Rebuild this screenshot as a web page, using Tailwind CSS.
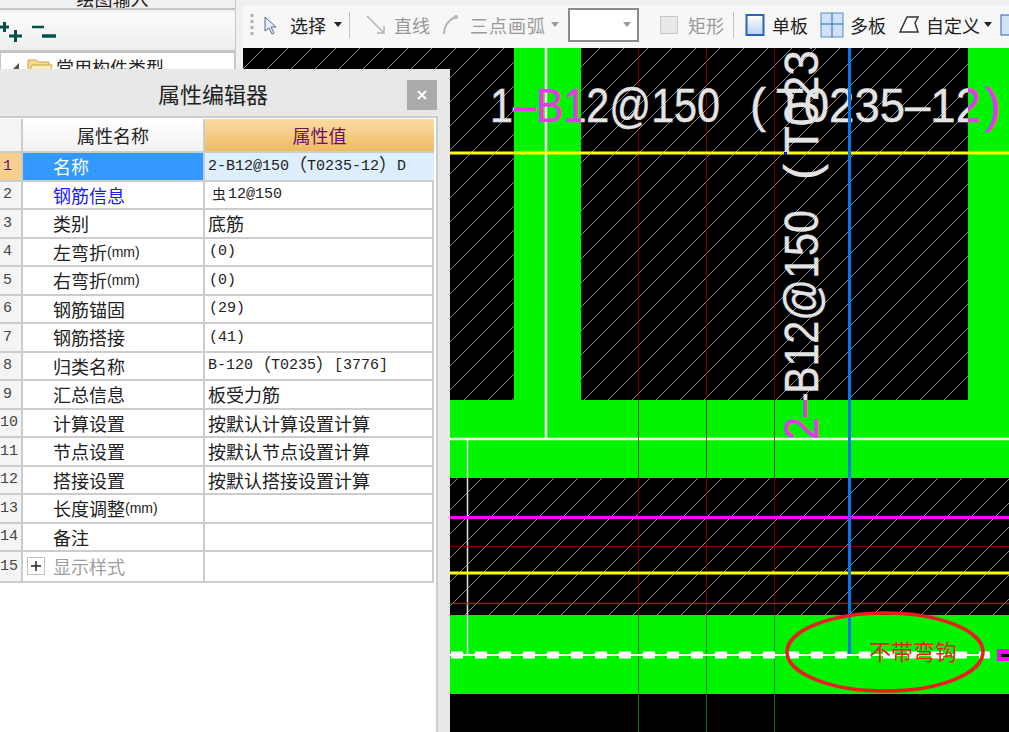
<!DOCTYPE html>
<html lang="zh-CN">
<head>
  <meta charset="UTF-8">
  <title>属性编辑器</title>
  <script src="https://cdn.jsdelivr.net/npm/@tailwindcss/browser@4"></script>
</head>
<body class="bg-[#f0f0f0]">
  <div class="relative w-[1009px] h-[732px] overflow-hidden flex font-['Noto_Sans_CJK_SC',sans-serif] text-[#222]">

    <!-- left tree panel -->
    <div class="w-[236px] h-full shrink-0 flex flex-col bg-[#f0f0f0] border-r border-[#c8c8c8]">
      <div class="h-[10px] overflow-hidden border-b-2 border-[#c4c4c4] flex justify-center">
        <span class="text-[18px] leading-[18px] mt-[-11px] ml-[-10px]">绘图输入</span>
      </div>
      <div class="h-[40px] mt-[2px] flex items-center gap-[9px] bg-gradient-to-b from-[#fbfbfb] to-[#eeeeee] border-b-2 border-[#c4c4c4]">
        <svg width="23" height="24" viewBox="0 0 23 24" class="shrink-0"><path d="M0 8h9M4.500 3v10M9 17h13M15.500 11v12" stroke="#04504a" stroke-width="3" fill="none"/></svg>
        <svg width="26" height="22" viewBox="0 0 26 22" class="shrink-0"><path d="M0 7h12" stroke="#04504a" stroke-width="2.500"/><path d="M10 16h14" stroke="#04504a" stroke-width="3.500"/></svg>
      </div>
      <div class="flex-1 bg-white border border-[#c4c4c4] flex items-start pt-[2px] pl-[8px]">
        <svg width="12" height="14" viewBox="0 0 12 14" class="mt-[6px]"><path d="M10 2v9H1z" fill="#555"/></svg>
        <svg width="26" height="20" viewBox="0 0 26 20" class="ml-[6px] mt-[2px]"><path d="M1 3h8l2 2h11v13H1z" fill="#f8dc8c" stroke="#c8a44c"/><path d="M5 8h20l-3 10H1z" fill="#fdeeb8" stroke="#c8a44c"/></svg>
        <span class="ml-[3px] text-[18px] leading-[24px]">常用构件类型</span>
      </div>
    </div>

    <!-- right: toolbar + drawing -->
    <div class="ml-[7px] flex-1 min-w-0 flex flex-col">
      <div class="h-[6px]"></div>
      <div class="h-[42px] shrink-0 flex items-center pb-[5px] text-[18px] leading-none bg-[#f7f7f7] overflow-hidden whitespace-nowrap [&>*]:shrink-0">
        <svg width="4" height="24" viewBox="0 0 4 24" class="ml-[7px]"><path d="M2 1v22" stroke="#b0b0b0" stroke-width="3" stroke-dasharray="3 3"/></svg>
        <svg width="14" height="20" viewBox="0 0 14 20" class="ml-[9px]"><path d="M2 2v14l4-3 3 6 2-1-3-6h5z" fill="#e8eef8" stroke="#5a6a90"/></svg>
        <span class="ml-[13px]">选择</span>
        <span class="ml-[8px] w-0 h-0 border-x-[4px] border-x-transparent border-t-[5px] border-t-[#222]"></span>
        <span class="ml-[7px] w-px h-[26px] bg-[#c0c0c0]"></span>
        <svg width="22" height="22" viewBox="0 0 22 22" class="ml-[15px]"><path d="M2 2l17 17M19 12v7h-7" stroke="#b4b4b4" stroke-width="1.500" fill="none"/></svg>
        <span class="ml-[7px] text-[#999]">直线</span>
        <svg width="18" height="22" viewBox="0 0 18 22" class="ml-[11px]"><path d="M3 20C3 12 8 6 14 3" stroke="#b4b4b4" stroke-width="2" fill="none"/><circle cx="15" cy="3" r="2" fill="#b4b4b4"/></svg>
        <span class="ml-[11px] text-[#999] tracking-[1px]">三点画弧</span>
        <span class="ml-[5px] w-0 h-0 border-x-[4px] border-x-transparent border-t-[5px] border-t-[#999]"></span>
        <div class="ml-[9px] w-[71px] h-[34px] bg-white border-2 border-[#8c8c8c] flex items-center justify-end pr-[6px]">
          <span class="w-0 h-0 border-x-[4px] border-x-transparent border-t-[5px] border-t-[#999]"></span>
        </div>
        <span class="ml-[21px] w-[18px] h-[18px] bg-[#e8e8e8] border border-[#c8c8c8]"></span>
        <span class="ml-[10px] text-[#999]">矩形</span>
        <span class="ml-[9px] w-px h-[26px] bg-[#c0c0c0]"></span>
        <svg width="20" height="24" viewBox="0 0 20 24" class="ml-[11px]"><defs><linearGradient id="board" x1="0" y1="0" x2="0" y2="1"><stop offset="0" stop-color="#fff"/><stop offset="1" stop-color="#b8d2f4"/></linearGradient></defs><rect x="1.500" y="2" width="17" height="20" fill="url(#board)" stroke="#2a62b8" stroke-width="2"/></svg>
        <span class="ml-[7px]">单板</span>
        <svg width="24" height="26" viewBox="0 0 24 26" class="ml-[12px]"><rect x="1" y="1" width="22" height="24" fill="#cfe2f8" stroke="#5a8cc8"/><path d="M12 1v24M1 12h22" stroke="#2a62b8"/></svg>
        <span class="ml-[6px]">多板</span>
        <svg width="22" height="20" viewBox="0 0 22 20" class="ml-[12px]"><path d="M9 2h11l-3 6 3 9H2z" fill="#fff" stroke="#333" stroke-width="1.500"/></svg>
        <span class="ml-[6px]">自定义</span>
        <span class="ml-[4px] w-0 h-0 border-x-[4px] border-x-transparent border-t-[5px] border-t-[#222]"></span>
        <svg width="22" height="24" viewBox="0 0 22 24" class="ml-[8px]"><rect x="1" y="2" width="20" height="20" fill="#cfe2f8" stroke="#2a62b8"/></svg>
      </div>

      <!-- CAD drawing, free canvas in page coordinates -->
      <svg class="block shrink-0" width="766" height="684" viewBox="243 48 766 684">
        <defs>
          <pattern id="hatch" patternUnits="userSpaceOnUse" width="24" height="24">
            <path d="M-2 26L26 -2M-14 14L14 -14M10 38L38 10" stroke="#8c8c8c" stroke-width="1" fill="none"/>
          </pattern>
          <clipPath id="onBlack">
            <rect x="243" y="48" width="271" height="352"/>
            <rect x="581" y="48" width="387" height="352"/>
          </clipPath>
          <clipPath id="onGreen">
            <rect x="514" y="48" width="67" height="352"/>
            <rect x="968" y="48" width="41" height="352"/>
            <rect x="450" y="400" width="559" height="78"/>
          </clipPath>
          <g id="tail">
            <text x="260">(</text>
            <text x="286" textLength="205" lengthAdjust="spacingAndGlyphs">T0235–12</text>
            <text x="495">)</text>
          </g>
          <g id="label1" font-family="'Liberation Sans',sans-serif" font-size="48" stroke-width="0.400">
            <text x="0" textLength="230" lengthAdjust="spacingAndGlyphs">1–B12@150</text>
            <use href="#tail"/>
          </g>
          <g id="label2" font-family="'Liberation Sans',sans-serif" font-size="48" stroke-width="0.400">
            <text x="0" textLength="230" lengthAdjust="spacingAndGlyphs">2–B12@150</text>
            <use href="#tail"/>
          </g>
        </defs>
        <rect x="243" y="48" width="766" height="684" fill="#000"/>
        <!-- hatched slabs -->
        <rect x="243" y="48" width="271" height="352" fill="url(#hatch)"/>
        <rect x="581" y="48" width="387" height="352" fill="url(#hatch)"/>
        <rect x="450" y="478" width="559" height="137" fill="url(#hatch)"/>
        <!-- green beams -->
        <rect x="514" y="48" width="67" height="352" fill="#00f400"/>
        <rect x="968" y="48" width="41" height="352" fill="#00f400"/>
        <rect x="450" y="400" width="559" height="78" fill="#00f400"/>
        <rect x="450" y="615" width="559" height="79" fill="#00f400"/>
        <!-- white outlines -->
        <path d="M546 48V439" stroke="#fff" stroke-width="2.500"/>
        <path d="M450 439H1009" stroke="#fff" stroke-width="2.500"/>
        <path d="M467.500 440V655" stroke="#e0e0e0" stroke-width="1.500"/>
        <!-- axis lines -->
        <path d="M638.500 48V400M706.500 48V400M774.500 48V400M638.500 478V615M706.500 478V615M774.500 478V615" stroke="#7a0000"/>
        <path d="M638.500 400V478M706.500 400V478M774.500 400V478" stroke="#5e5000"/>
        <path d="M638.500 615V732M706.500 615V732M774.500 615V732" stroke="#007a00"/>
        <path d="M450 153H1009" stroke="#ffff00" stroke-width="3"/>
        <path d="M450 517.500H1009" stroke="#ff00ff" stroke-width="3"/>
        <path d="M450 546.500H1009" stroke="#6e0000"/>
        <path d="M450 573H1009" stroke="#ffff00" stroke-width="3"/>
        <path d="M450 603.500H1009" stroke="#c00000" stroke-width="1.500"/>
        <!-- rebar labels: white on slab, magenta on beam -->
        <g fill="#e4e4e4" stroke="#e4e4e4" clip-path="url(#onBlack)">
          <use href="#label1" x="490" y="122"/>
          <use href="#label2" transform="translate(818 440) rotate(-90)"/>
        </g>
        <g fill="#e838e8" stroke="#e838e8" clip-path="url(#onGreen)">
          <use href="#label1" x="490" y="122"/>
          <use href="#label2" transform="translate(818 440) rotate(-90)"/>
        </g>
        <rect x="784" y="152" width="3" height="3" fill="#1010e0"/>
        <path d="M849.500 48V655" stroke="#0078f0" stroke-width="3"/>
        <!-- bottom bar without hook -->
        <path d="M450 655H990" stroke="#fff" stroke-width="2"/>
        <path d="M451 655H990" stroke="#fff" stroke-width="7" stroke-dasharray="12 12"/>
        <rect x="997" y="649" width="12" height="12" fill="#ff00ff"/>
        <rect x="1001" y="654" width="8" height="3" fill="#000"/>
        <ellipse cx="885" cy="652" rx="98" ry="39" fill="none" stroke="#ed1c24" stroke-width="3.500"/>
        <text x="869" y="660" font-family="'Noto Sans CJK SC',sans-serif" font-size="22" fill="#ed1c24">不带弯钩</text>
      </svg>
    </div>

    <!-- property editor window -->
    <div class="absolute left-0 top-[69px] bottom-0 w-[450px] bg-[#e8e8e8] flex flex-col">
      <div class="h-[47px] shrink-0 relative flex items-center justify-center pr-[24px]">
        <span class="text-[22px] leading-none">属性编辑器</span>
        <span class="absolute left-[407px] top-[11px] w-[30px] h-[30px] bg-[#aaaaaa] flex items-center justify-center">
          <svg width="10" height="10" viewBox="0 0 10 10"><path d="M1 1l8 8M9 1l-8 8" stroke="#fff" stroke-width="2"/></svg>
        </span>
      </div>
      <div class="flex-1 w-[438px] bg-white border-t-2 border-r-2 border-[#cccccc] pt-px">
        <div class="w-[434px] grid grid-cols-[23px_182px_229px] grid-rows-[34px_repeat(15,28.53px)] text-[18px] leading-none border-b-2 border-r-2 border-[#cccccc] [&>div]:border-b-2 [&>div]:border-[#cccccc] [&>div]:flex [&>div]:items-center">
          <div class="bg-[#f4f4f4] border-r-2"></div>
          <div class="bg-gradient-to-b from-white to-[#f2f2f2] border-r-2 justify-center">属性名称</div>
          <div class="bg-gradient-to-b from-[#fbdca4] to-[#efbb5e] justify-center text-[#6b1060]">属性值</div>

          <div class="bg-[#f8cf8d] border-r-2 text-[#6b1060] font-['Liberation_Mono',monospace] text-[15px] w-[23px]"><span class="w-[15px] text-center">1</span></div>
          <div class="bg-[#3399ff] text-white border-r-2 pl-[30px]">名称</div>
          <div class="bg-[#ddeeff] pl-[3px] font-['Liberation_Mono','Noto_Sans_CJK_SC',monospace] text-[15px]">2-B12@150<span class="text-[18px]">（</span>T0235-12<span class="text-[18px]">）</span>D</div>

          <div class="bg-[#f4f4f4] border-r-2 font-['Liberation_Mono',monospace] text-[15px] text-[#444]"><span class="w-[15px] text-center">2</span></div>
          <div class="border-r-2 pl-[30px] text-[#1a1aff]">钢筋信息</div>
          <div class="pl-[7px] font-['Liberation_Mono','Noto_Sans_CJK_SC',monospace] text-[15px]"><span class="text-[14px] w-[16px]">虫</span>12@150</div>

          <div class="bg-[#f4f4f4] border-r-2 font-['Liberation_Mono',monospace] text-[15px] text-[#444]"><span class="w-[15px] text-center">3</span></div>
          <div class="border-r-2 pl-[30px]">类别</div>
          <div class="pl-[3px]">底筋</div>

          <div class="bg-[#f4f4f4] border-r-2 font-['Liberation_Mono',monospace] text-[15px] text-[#444]"><span class="w-[15px] text-center">4</span></div>
          <div class="border-r-2 pl-[30px]">左弯折<span class="font-['Liberation_Sans',sans-serif] text-[14px]">(mm)</span></div>
          <div class="pl-[4px] font-['Liberation_Mono',monospace] text-[15px]">(0)</div>

          <div class="bg-[#f4f4f4] border-r-2 font-['Liberation_Mono',monospace] text-[15px] text-[#444]"><span class="w-[15px] text-center">5</span></div>
          <div class="border-r-2 pl-[30px]">右弯折<span class="font-['Liberation_Sans',sans-serif] text-[14px]">(mm)</span></div>
          <div class="pl-[4px] font-['Liberation_Mono',monospace] text-[15px]">(0)</div>

          <div class="bg-[#f4f4f4] border-r-2 font-['Liberation_Mono',monospace] text-[15px] text-[#444]"><span class="w-[15px] text-center">6</span></div>
          <div class="border-r-2 pl-[30px]">钢筋锚固</div>
          <div class="pl-[4px] font-['Liberation_Mono',monospace] text-[15px]">(29)</div>

          <div class="bg-[#f4f4f4] border-r-2 font-['Liberation_Mono',monospace] text-[15px] text-[#444]"><span class="w-[15px] text-center">7</span></div>
          <div class="border-r-2 pl-[30px]">钢筋搭接</div>
          <div class="pl-[4px] font-['Liberation_Mono',monospace] text-[15px]">(41)</div>

          <div class="bg-[#f4f4f4] border-r-2 font-['Liberation_Mono',monospace] text-[15px] text-[#444]"><span class="w-[15px] text-center">8</span></div>
          <div class="border-r-2 pl-[30px]">归类名称</div>
          <div class="pl-[3px] font-['Liberation_Mono','Noto_Sans_CJK_SC',monospace] text-[15px]">B-120<span class="text-[18px]">（</span>T0235<span class="text-[18px]">）</span>[3776]</div>

          <div class="bg-[#f4f4f4] border-r-2 font-['Liberation_Mono',monospace] text-[15px] text-[#444]"><span class="w-[15px] text-center">9</span></div>
          <div class="border-r-2 pl-[30px]">汇总信息</div>
          <div class="pl-[3px]">板受力筋</div>

          <div class="bg-[#f4f4f4] border-r-2 font-['Liberation_Mono',monospace] text-[15px] text-[#444]"><span class="w-[15px] text-center">10</span></div>
          <div class="border-r-2 pl-[30px]">计算设置</div>
          <div class="pl-[3px]">按默认计算设置计算</div>

          <div class="bg-[#f4f4f4] border-r-2 font-['Liberation_Mono',monospace] text-[15px] text-[#444]"><span class="w-[15px] text-center">11</span></div>
          <div class="border-r-2 pl-[30px]">节点设置</div>
          <div class="pl-[3px]">按默认节点设置计算</div>

          <div class="bg-[#f4f4f4] border-r-2 font-['Liberation_Mono',monospace] text-[15px] text-[#444]"><span class="w-[15px] text-center">12</span></div>
          <div class="border-r-2 pl-[30px]">搭接设置</div>
          <div class="pl-[3px]">按默认搭接设置计算</div>

          <div class="bg-[#f4f4f4] border-r-2 font-['Liberation_Mono',monospace] text-[15px] text-[#444]"><span class="w-[15px] text-center">13</span></div>
          <div class="border-r-2 pl-[30px]">长度调整<span class="font-['Liberation_Sans',sans-serif] text-[14px]">(mm)</span></div>
          <div></div>

          <div class="bg-[#f4f4f4] border-r-2 font-['Liberation_Mono',monospace] text-[15px] text-[#444]"><span class="w-[15px] text-center">14</span></div>
          <div class="border-r-2 pl-[30px]">备注</div>
          <div></div>

          <div class="bg-[#f4f4f4] border-r-2 font-['Liberation_Mono',monospace] text-[15px] text-[#444] !border-b-0"><span class="w-[15px] text-center">15</span></div>
          <div class="border-r-2 pl-[4px] text-[#a0a0a0] !border-b-0">
            <span class="w-[18px] h-[18px] border border-[#c0c0c0] flex items-center justify-center mr-[8px]">
              <svg width="10" height="10" viewBox="0 0 10 10"><path d="M0 5h10M5 0v10" stroke="#222" stroke-width="1.500"/></svg>
            </span>显示样式
          </div>
          <div class="!border-b-0"></div>
        </div>
      </div>
    </div>
  </div>
</body>
</html>
